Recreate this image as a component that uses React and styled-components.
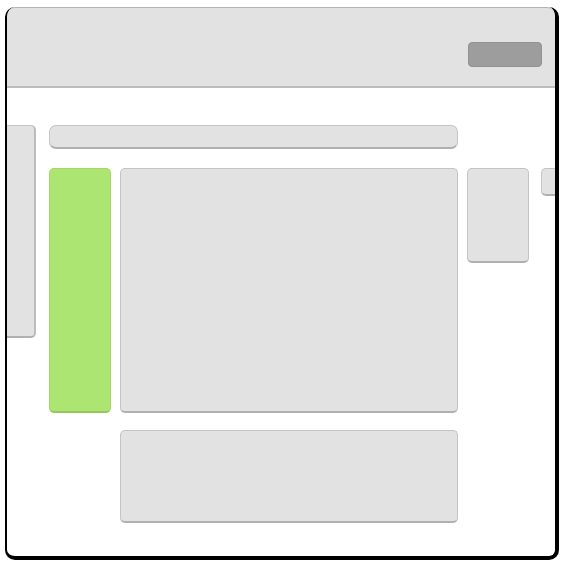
import React from "react";
import styled, { createGlobalStyle } from "styled-components";

const Global = createGlobalStyle`
  html, body {
    margin: 0;
    padding: 0;
    background: #fff;
    font-family: "Liberation Sans", Arial, sans-serif;
  }
`;

export default function App() {
  return (
    <>
      <Global />
      <Page>
        <Window>
          <Header>
            <HeaderButton />
          </Header>
          <Content>
            <SidePeek />
            <SearchBar />
            <Accent />
            <MainPanel />
            <Thumb />
            <EdgePeek />
            <Footer />
          </Content>
        </Window>
      </Page>
    </>
  );
}

const Page = styled.div`
  width: 561px;
  height: 563px;
  padding: 7px 2px 3px 5px;
  box-sizing: border-box;
`;

const Window = styled.div`
  height: 100%;
  box-sizing: border-box;
  border-left: 2px solid #000;
  border-right: 4px solid #000;
  border-bottom: 4px solid #000;
  border-radius: 10px;
  overflow: hidden;
  background: #fff;
  display: flex;
  flex-direction: column;
`;

const Header = styled.div`
  height: 81px;
  box-sizing: border-box;
  background: #e2e2e2;
  border-top: 1px solid #b4b4b4;
  border-bottom: 2px solid #bdbdbd;
  border-radius: 8px 8px 0 0;
  display: flex;
  justify-content: flex-end;
  align-items: flex-start;
  padding: 34px 13px 0 0;
`;

const HeaderButton = styled.div`
  width: 74px;
  height: 25px;
  box-sizing: border-box;
  background: #9d9d9d;
  border: 1px solid #929292;
  border-radius: 4px;
`;

const Content = styled.div`
  display: grid;
  grid-template-columns: 33px 62px 338px 62px 1fr;
  grid-template-rows: 26px 245px 93px;
  column-gap: 9px;
  row-gap: 17px;
  padding-top: 37px;
`;

const Box = styled.div`
  box-sizing: border-box;
  background: #e2e2e2;
  border: 1px solid #c4c4c4;
  border-bottom: 2px solid #b0b0b0;
  border-radius: 5px;
`;

const SidePeek = styled(Box)`
  grid-column: 1;
  grid-row: 1 / 3;
  width: 29px;
  height: 213px;
  border-left: none;
  border-right: 2px solid #bcbcbc;
  border-radius: 0 5px 5px 0;
`;

const SearchBar = styled(Box)`
  grid-column: 2 / 4;
  grid-row: 1;
  height: 24px;
  border-radius: 7px;
`;

const Accent = styled(Box)`
  grid-column: 2;
  grid-row: 2;
  background: #ade572;
  border-color: #a3d866;
  border-bottom-color: #95c75b;
`;

const MainPanel = styled(Box)`
  grid-column: 3;
  grid-row: 2;
`;

const Thumb = styled(Box)`
  grid-column: 4;
  grid-row: 2;
  height: 95px;
`;

const EdgePeek = styled(Box)`
  grid-column: 5;
  grid-row: 2;
  margin-left: 3px;
  height: 28px;
  border-right: none;
  border-radius: 5px 0 0 5px;
`;

const Footer = styled(Box)`
  grid-column: 3;
  grid-row: 3;
`;
